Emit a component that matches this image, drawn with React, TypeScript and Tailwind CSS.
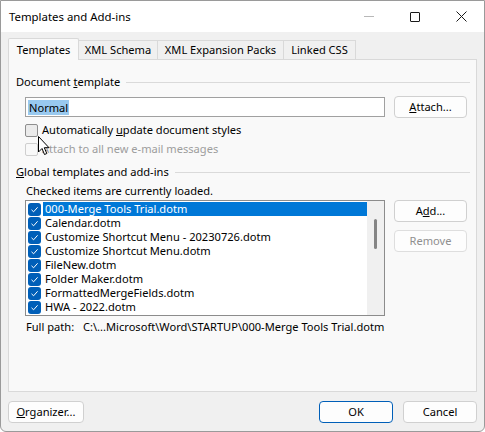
import React from 'react';

const font = { fontFamily: '"Noto Sans", "Open Sans", Arial, sans-serif' };

const items = [
  '000-Merge Tools Trial.dotm',
  'Calendar.dotm',
  'Customize Shortcut Menu - 20230726.dotm',
  'Customize Shortcut Menu.dotm',
  'FileNew.dotm',
  'Folder Maker.dotm',
  'FormattedMergeFields.dotm',
  'HWA - 2022.dotm',
];

const Check = () => (
  <span className="w-[13px] h-[13px] shrink-0 rounded-[3px] bg-[#005fb8] flex items-center justify-center">
    <svg width="9" height="9" viewBox="0 0 9 9" fill="none">
      <path d="M1.5 4.8 L3.6 6.8 L7.6 2.3" stroke="white" strokeWidth="1" />
    </svg>
  </span>
);

const GroupHeader = ({ children }: { children: React.ReactNode }) => (
  <div className="flex items-center gap-[6px] h-[16px]">
    <span>{children}</span>
    <span className="flex-1 h-px bg-[#dadada]" />
  </div>
);

const Button = ({
  children,
  className = '',
  disabled = false,
}: {
  children: React.ReactNode;
  className?: string;
  disabled?: boolean;
}) => (
  <div
    className={`h-[22px] flex items-center justify-center rounded-[4px] border bg-[#fdfdfd] ${
      disabled ? 'border-[#dedede] text-[#8f8f8f]' : 'border-[#d0d0d0] text-black'
    } ${className}`}
  >
    {children}
  </div>
);

export default function App() {
  return (
    <div
      className="w-[485px] h-[432px] flex flex-col bg-[#f0f0f0] border border-[#9a9a9a] rounded-b-[6px] overflow-hidden text-[11.1px] leading-[16px] text-black"
      style={font}
    >
      {/* Title bar */}
      <div className="h-[31px] bg-white flex items-center shrink-0">
        <span className="pl-[8px] flex-1 text-[11.4px]">Templates and Add-ins</span>
        <div className="flex items-center h-full">
          <div className="w-[46px] flex justify-center">
            <span className="w-[10px] h-px bg-[#b8b8b8]" />
          </div>
          <div className="w-[46px] flex justify-center">
            <span className="w-[10px] h-[10px] border border-[#1a1a1a] rounded-[1px]" />
          </div>
          <div className="w-[46px] flex justify-center">
            <svg width="11" height="11" viewBox="0 0 11 11">
              <path d="M0.5 0.5 L10.5 10.5 M10.5 0.5 L0.5 10.5" stroke="#1a1a1a" strokeWidth="1" />
            </svg>
          </div>
        </div>
      </div>

      <div className="flex-1 flex flex-col px-[7px] pt-[6px]">
        {/* Tabs */}
        <div className="flex items-end h-[22px] relative z-10 -mb-px">
          <div className="w-[71px] h-[22px] flex items-center justify-center bg-[#f9f9f9] border border-b-0 border-[#d9d9d9] rounded-t-[2px]">
            Templates
          </div>
          <div className="w-[79px] h-[20px] flex items-center justify-center bg-[#f0f0f0] border border-l-0 border-[#d9d9d9]">
            XML Schema
          </div>
          <div className="w-[126px] h-[20px] flex items-center justify-center bg-[#f0f0f0] border border-l-0 border-[#d9d9d9]">
            XML Expansion Packs
          </div>
          <div className="w-[72px] h-[20px] flex items-center justify-center bg-[#f0f0f0] border border-l-0 border-[#d9d9d9]">
            Linked CSS
          </div>
        </div>

        {/* Panel */}
        <div className="h-[333px] border border-[#d9d9d9] bg-[#f9f9f9] pl-[7px] pr-[6px] pt-[14px] relative">
          <GroupHeader>
            Document <u>t</u>emplate
          </GroupHeader>

          <div className="flex items-center mt-[6px] pl-[9px]">
            <div className="w-[360px] h-[20px] bg-white border border-[#a0a0a0] flex items-center px-[2px]">
              <span className="bg-[#99c9ef] px-px leading-[15px]">Normal</span>
            </div>
            <Button className="w-[73px] ml-[9px]">
              <span>
                <u>A</u>ttach...
              </span>
            </Button>
          </div>

          <div className="flex items-center gap-[4px] mt-[4px] pl-[9px] h-[16px]">
            <span className="w-[13px] h-[13px] rounded-[2px] border border-[#8e8e8e] bg-[#ebebeb]" />
            <span>
              Automatically <u>u</u>pdate document styles
            </span>
          </div>
          <div className="flex items-center gap-[4px] mt-[3px] pl-[9px] h-[16px] text-[#9d9d9d]">
            <span className="w-[13px] h-[13px] rounded-[2px] border border-[#cfcfcf]" />
            <span>Attach to all new e-mail messages</span>
          </div>

          {/* mouse cursor */}
          <svg
            className="absolute left-[29px] top-[76px]"
            width="13"
            height="20"
            viewBox="0 0 13 20"
          >
            <path
              d="M0.5 0.5 L0.5 16 L4 12.5 L6.5 18.5 L8.8 17.5 L6.3 11.7 L11 11.7 Z"
              fill="white"
              stroke="black"
              strokeWidth="1"
              strokeLinejoin="round"
            />
          </svg>

          <div className="mt-[7px]">
            <GroupHeader>
              <u>G</u>lobal templates and add-ins
            </GroupHeader>
          </div>
          <div className="mt-[3px] pl-[10px] h-[16px]">Checked items are currently loaded.</div>

          <div className="flex items-start mt-px pl-[9px]">
            <div className="w-[360px] h-[116px] border border-[#8c8c8c] bg-white flex">
              <div className="flex-1 pt-px">
                {items.map((it, i) => (
                  <div key={it} className="h-[14px] flex items-center">
                    <span className="pl-[2px] pr-[2px]">
                      <Check />
                    </span>
                    <span
                      className={`flex-1 h-[14px] leading-[14px] pl-[2px] whitespace-nowrap ${
                        i === 0 ? 'bg-[#0078d7] text-white' : ''
                      }`}
                    >
                      {it}
                    </span>
                  </div>
                ))}
              </div>
              <div className="w-[17px] bg-[#f0f0f0] flex justify-center pt-[18px]">
                <span className="w-[3px] h-[30px] rounded-full bg-[#858585]" />
              </div>
            </div>
            <div className="ml-[9px] flex flex-col gap-[8px]">
              <Button className="w-[73px]">
                <span>
                  A<u>d</u>d...
                </span>
              </Button>
              <Button className="w-[73px]" disabled>
                Remove
              </Button>
            </div>
          </div>

          <div className="flex mt-[3px] pl-[10px] h-[16px]">
            <span className="w-[57px]">Full path:</span>
            <span>C:\...Microsoft\Word\STARTUP\000-Merge Tools Trial.dotm</span>
          </div>
        </div>

        {/* Bottom buttons */}
        <div className="flex mt-[9px]">
          <Button className="w-[76px]">
            <span>
              <u>O</u>rganizer...
            </span>
          </Button>
          <div className="flex-1" />
          <Button className="w-[74px] !border-[#005fb8]">OK</Button>
          <Button className="w-[74px] ml-[10px]">Cancel</Button>
        </div>
      </div>
    </div>
  );
}
